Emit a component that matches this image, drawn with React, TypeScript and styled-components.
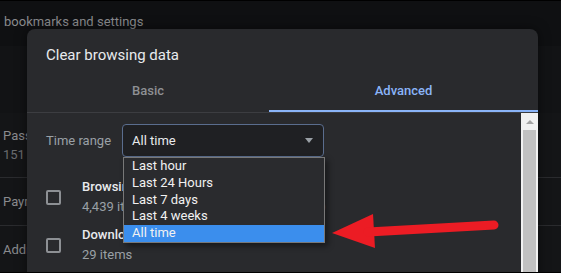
import React from 'react';
import styled, { createGlobalStyle } from 'styled-components';

const GlobalStyle = createGlobalStyle`
  html, body {
    margin: 0;
    padding: 0;
    background: #0f1012;
  }
  body {
    font-family: Roboto, "Liberation Sans", Arial, sans-serif;
    -webkit-font-smoothing: antialiased;
  }
`;

const colors = {
  page: '#0f1012',
  card: '#141517',
  cardLine: '#2a2b2e',
  dimText: '#8a8b8e',
  dimSub: '#6a6b6e',
  dialog: '#292a2d',
  divider: '#3c3d41',
  text: '#e8eaed',
  subText: '#9aa0a6',
  accent: '#8ab4f8',
  selectBg: '#1f2023',
  selectBorder: '#5a6d8e',
  listBorder: '#787878',
  highlight: '#3b8eed',
  arrow: '#ec1c24',
};

const Page = styled.div`
  position: relative;
  width: 561px;
  height: 273px;
  overflow: hidden;
  background: ${colors.page};
  border-top: 1px solid #000;
  border-bottom: 1px solid #000;
  box-sizing: border-box;
  display: flex;
  flex-direction: column;
`;

const TopBar = styled.div`
  height: 45px;
  flex-shrink: 0;
  display: flex;
  align-items: center;
  padding-left: 4px;
  font-size: 13px;
  color: ${colors.dimText};
  padding-bottom: 4px;
  box-sizing: border-box;
`;

const SettingsCard = styled.div`
  flex: 1;
  background: ${colors.card};
  display: flex;
  flex-direction: column;
`;

const CardHeader = styled.div`
  height: 67px;
  flex-shrink: 0;
  background: #121315;
`;

interface RowProps {
  tall?: boolean;
}

const SettingsRow = styled.div<RowProps>`
  height: ${(p) => (p.tall ? '65px' : '48px')};
  flex-shrink: 0;
  box-sizing: border-box;
  border-bottom: 1px solid ${colors.cardLine};
  padding-left: 3px;
  display: flex;
  flex-direction: column;
  justify-content: center;
  gap: 3px;
  font-size: 13px;
  line-height: 16px;
`;

const RowTitle = styled.div`
  color: ${colors.dimText};
`;

const RowSub = styled.div`
  color: ${colors.dimSub};
`;

const Dialog = styled.div`
  position: absolute;
  top: 28px;
  left: 27px;
  width: 511px;
  height: 260px;
  background: ${colors.dialog};
  border-radius: 8px 8px 0 0;
  box-shadow: 0 0 12px rgba(0, 0, 0, 0.5);
  display: flex;
  flex-direction: column;
  overflow: hidden;
`;

const Title = styled.h2`
  margin: 0;
  padding: 16px 19px 0;
  font-size: 15px;
  line-height: 20px;
  font-weight: 400;
  color: ${colors.text};
`;

const Tabs = styled.div`
  margin-top: 7px;
  display: grid;
  grid-template-columns: 242px 1fr;
  border-bottom: 1px solid ${colors.divider};
`;

interface TabProps {
  active?: boolean;
}

const Tab = styled.div<TabProps>`
  height: 40px;
  box-sizing: border-box;
  display: flex;
  align-items: center;
  justify-content: center;
  padding-bottom: 2px;
  font-size: 13px;
  font-weight: 500;
  color: ${(p) => (p.active ? colors.accent : '#8e9094')};
  border-bottom: 2px solid ${(p) => (p.active ? colors.accent : 'transparent')};
`;

const Body = styled.div`
  flex: 1;
  display: grid;
  grid-template-columns: 1fr 17px;
`;

const Content = styled.div`
  padding: 11px 0 0 19px;
  display: flex;
  flex-direction: column;
`;

const TimeRow = styled.div`
  display: flex;
  align-items: center;
`;

const Label = styled.span`
  width: 76px;
  font-size: 13px;
  color: ${colors.subText};
`;

const SelectBox = styled.div`
  position: relative;
  width: 202px;
  height: 33px;
  box-sizing: border-box;
  border: 1px solid ${colors.selectBorder};
  border-radius: 4px;
  background: ${colors.selectBg};
  display: flex;
  align-items: center;
  justify-content: space-between;
  padding: 0 10px 0 9px;
  font-size: 13px;
  color: ${colors.text};
`;

const Caret = styled.span`
  width: 0;
  height: 0;
  border-left: 4.5px solid transparent;
  border-right: 4.5px solid transparent;
  border-top: 5px solid ${colors.subText};
`;

const OptionList = styled.ul`
  position: absolute;
  top: 32px;
  left: 0;
  width: 200px;
  margin: 0;
  padding: 0;
  list-style: none;
  background: #2a2b2e;
  border: 1px solid ${colors.listBorder};
  box-shadow: 3px 3px 6px rgba(0, 0, 0, 0.45);
  z-index: 2;
`;

interface OptionProps {
  selected?: boolean;
}

const Option = styled.li<OptionProps>`
  height: 16.75px;
  line-height: 16.75px;
  padding-left: 8px;
  font-size: 13px;
  color: #f1f1f1;
  background: ${(p) => (p.selected ? colors.highlight : 'transparent')};
`;

const CheckRows = styled.div`
  display: flex;
  flex-direction: column;
  margin-top: 16px;
`;

const CheckRow = styled.div`
  height: 48px;
  display: flex;
  align-items: center;
  gap: 21px;
`;

const Checkbox = styled.span`
  width: 15px;
  height: 15px;
  box-sizing: border-box;
  border: 2px solid #8d9094;
  border-radius: 2px;
  flex-shrink: 0;
`;

const CheckText = styled.div`
  display: flex;
  flex-direction: column;
  font-size: 13px;
  line-height: 20px;
  white-space: nowrap;
`;

const CheckTitle = styled.span`
  color: ${colors.text};
  font-weight: 500;
`;

const CheckSub = styled.span`
  color: ${colors.subText};
`;

const Scrollbar = styled.div`
  background: #f1f1f1;
  display: flex;
  flex-direction: column;
  align-items: center;
`;

const ScrollArrow = styled.div`
  height: 17px;
  width: 100%;
  display: flex;
  align-items: center;
  justify-content: center;
  &::after {
    content: '';
    border-left: 4px solid transparent;
    border-right: 4px solid transparent;
    border-bottom: 4px solid #a3a3a3;
  }
`;

const Thumb = styled.div`
  flex: 1;
  width: 13px;
  background: #c1c1c1;
`;

const ArrowMark = styled.svg`
  position: absolute;
  left: 328px;
  top: 208px;
  z-index: 3;
`;

const ranges = ['Last hour', 'Last 24 Hours', 'Last 7 days', 'Last 4 weeks', 'All time'];

const App: React.FC = () => {
  return (
    <>
      <GlobalStyle />
      <Page>
        <TopBar>bookmarks and settings</TopBar>
        <SettingsCard>
          <CardHeader />
          <SettingsRow tall>
            <RowTitle>Passwords</RowTitle>
            <RowSub>151 passwords</RowSub>
          </SettingsRow>
          <SettingsRow>
            <RowTitle>Payment methods</RowTitle>
          </SettingsRow>
          <SettingsRow>
            <RowTitle>Addresses and more</RowTitle>
          </SettingsRow>
        </SettingsCard>

        <Dialog>
          <Title>Clear browsing data</Title>
          <Tabs>
            <Tab>Basic</Tab>
            <Tab active>Advanced</Tab>
          </Tabs>
          <Body>
            <Content>
              <TimeRow>
                <Label>Time range</Label>
                <SelectBox>
                  All time
                  <Caret />
                  <OptionList>
                    {ranges.map((r) => (
                      <Option key={r} selected={r === 'All time'}>
                        {r}
                      </Option>
                    ))}
                  </OptionList>
                </SelectBox>
              </TimeRow>
              <CheckRows>
                <CheckRow>
                  <Checkbox />
                  <CheckText>
                    <CheckTitle>Browsing history</CheckTitle>
                    <CheckSub>4,439 items (and more on synced devices)</CheckSub>
                  </CheckText>
                </CheckRow>
                <CheckRow>
                  <Checkbox />
                  <CheckText>
                    <CheckTitle>Download history</CheckTitle>
                    <CheckSub>29 items</CheckSub>
                  </CheckText>
                </CheckRow>
              </CheckRows>
            </Content>
            <Scrollbar>
              <ScrollArrow />
              <Thumb />
            </Scrollbar>
          </Body>
        </Dialog>

        <ArrowMark width="176" height="44" viewBox="0 0 176 44">
          <polygon points="4,24 45,5 47,39" fill={colors.arrow} />
          <line
            x1="40"
            y1="23"
            x2="166"
            y2="16"
            stroke={colors.arrow}
            strokeWidth="9"
            strokeLinecap="round"
          />
        </ArrowMark>
      </Page>
    </>
  );
};

export default App;
